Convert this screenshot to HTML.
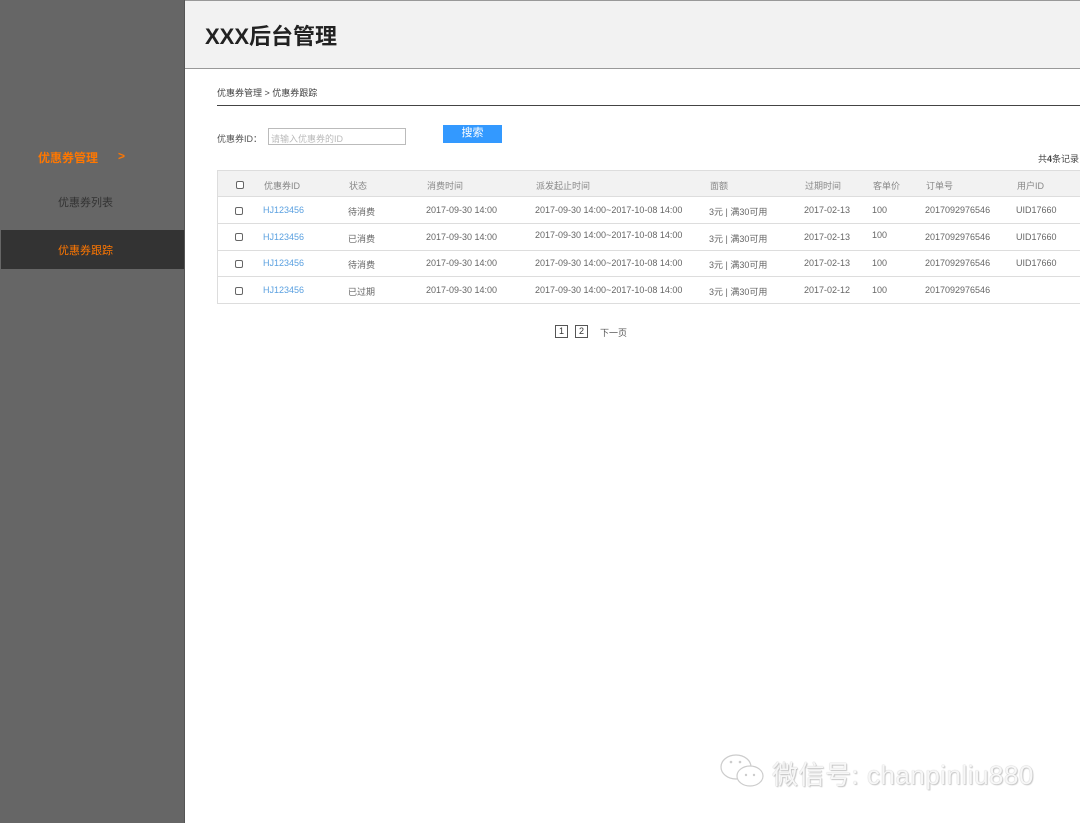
<!DOCTYPE html>
<html><head><meta charset="utf-8"><style>
*{margin:0;padding:0;box-sizing:border-box}
body{width:1080px;height:823px;position:relative;background:#fff;font-family:"Liberation Sans","Noto Sans CJK SC",sans-serif;color:#666;font-size:9px;overflow:hidden}
.a{position:absolute;white-space:nowrap}
#side{position:absolute;left:0;top:0;width:185px;height:823px;background:#666;border-right:1px solid #555}
#hdr{position:absolute;left:185px;top:0;width:895px;height:69px;background:#f2f2f2;border-bottom:1px solid #999;border-top:1px solid #999}
.cb{position:absolute;width:8px;height:8px;border:1px solid #666;border-radius:2px;background:#fff}
.row{position:absolute;left:217px;width:863px;border-bottom:1px solid #ddd}
.c{position:absolute;top:0;white-space:nowrap}
</style></head><body>
<div id="side">
<div class="a" style="left:38px;top:149px;color:#ff7700;font-size:12px;font-weight:bold">优惠券管理</div>
<div class="a" style="left:118px;top:149px;color:#ff7700;font-size:12px;font-weight:bold">&gt;</div>
<div class="a" style="left:58px;top:194px;color:#333;font-size:11px">优惠券列表</div>
<div style="position:absolute;left:1px;top:230px;width:183px;height:39px;background:#333"></div>
<div class="a" style="left:58px;top:242px;color:#ff7700;font-size:11px">优惠券跟踪</div>
</div>
<div id="hdr"><div class="a" style="left:20px;top:18px;font-size:22px;font-weight:bold;color:#222">XXX后台管理</div></div>
<div class="a" style="left:217px;top:86px;color:#444">优惠券管理 &gt; 优惠券跟踪</div>
<div style="position:absolute;left:217px;top:105px;width:863px;height:1px;background:#444"></div>
<div class="a" style="left:217px;top:132px;color:#555">优惠券ID：</div>
<div style="position:absolute;left:268px;top:128px;width:138px;height:17px;border:1px solid #bbb"></div>
<div class="a" style="left:271px;top:132px;color:#bbb">请输入优惠券的ID</div>
<div style="position:absolute;left:443px;top:125px;width:59px;height:18px;background:#3399ff;color:#fff;font-size:11px;text-align:center;line-height:17px">搜索</div>
<div class="a" style="right:1px;top:152px;color:#444">共<b>4</b>条记录</div>
<div style="position:absolute;left:217px;top:170px;width:863px;height:134px;border:1px solid #ddd;border-right:none"></div>
<div class="row" style="top:170px;height:27px;background:#f2f2f2;border-top:1px solid #ddd;border-left:1px solid #ddd">
<div class="cb" style="left:18px;top:10px"></div>
<div class="c" style="left:46px;top:8px;color:#888">优惠券ID</div><div class="c" style="left:131px;top:8px;color:#888">状态</div><div class="c" style="left:209px;top:8px;color:#888">消费时间</div><div class="c" style="left:318px;top:8px;color:#888">派发起止时间</div><div class="c" style="left:492px;top:8px;color:#888">面额</div><div class="c" style="left:587px;top:8px;color:#888">过期时间</div><div class="c" style="left:655px;top:8px;color:#888">客单价</div><div class="c" style="left:708px;top:8px;color:#888">订单号</div><div class="c" style="left:799px;top:8px;color:#888">用户ID</div>
</div>
<div class="row" style="top:197px;height:27px"><div class="cb" style="left:18px;top:10px"></div><div class="c" style="left:46px;top:8px;color:#5aa0e0">HJ123456</div><div class="c" style="left:131px;top:8px">待消费</div><div class="c" style="left:209px;top:8px">2017-09-30 14:00</div><div class="c" style="left:318px;top:8px">2017-09-30 14:00~2017-10-08 14:00</div><div class="c" style="left:492px;top:8px">3元 | 满30可用</div><div class="c" style="left:587px;top:8px">2017-02-13</div><div class="c" style="left:655px;top:8px">100</div><div class="c" style="left:708px;top:8px">2017092976546</div><div class="c" style="left:799px;top:8px">UID17660</div></div>
<div class="row" style="top:224px;height:27px"><div class="cb" style="left:18px;top:9px"></div><div class="c" style="left:46px;top:8px;color:#5aa0e0">HJ123456</div><div class="c" style="left:131px;top:8px">已消费</div><div class="c" style="left:209px;top:8px">2017-09-30 14:00</div><div class="c" style="left:318px;top:6px">2017-09-30 14:00~2017-10-08 14:00</div><div class="c" style="left:492px;top:8px">3元 | 满30可用</div><div class="c" style="left:587px;top:8px">2017-02-13</div><div class="c" style="left:655px;top:6px">100</div><div class="c" style="left:708px;top:8px">2017092976546</div><div class="c" style="left:799px;top:8px">UID17660</div></div>
<div class="row" style="top:251px;height:26px"><div class="cb" style="left:18px;top:9px"></div><div class="c" style="left:46px;top:7px;color:#5aa0e0">HJ123456</div><div class="c" style="left:131px;top:7px">待消费</div><div class="c" style="left:209px;top:7px">2017-09-30 14:00</div><div class="c" style="left:318px;top:7px">2017-09-30 14:00~2017-10-08 14:00</div><div class="c" style="left:492px;top:7px">3元 | 满30可用</div><div class="c" style="left:587px;top:7px">2017-02-13</div><div class="c" style="left:655px;top:7px">100</div><div class="c" style="left:708px;top:7px">2017092976546</div><div class="c" style="left:799px;top:7px">UID17660</div></div>
<div class="row" style="top:277px;height:27px"><div class="cb" style="left:18px;top:10px"></div><div class="c" style="left:46px;top:8px;color:#5aa0e0">HJ123456</div><div class="c" style="left:131px;top:8px">已过期</div><div class="c" style="left:209px;top:8px">2017-09-30 14:00</div><div class="c" style="left:318px;top:8px">2017-09-30 14:00~2017-10-08 14:00</div><div class="c" style="left:492px;top:8px">3元 | 满30可用</div><div class="c" style="left:587px;top:8px">2017-02-12</div><div class="c" style="left:655px;top:8px">100</div><div class="c" style="left:708px;top:8px">2017092976546</div></div>
<div class="a" style="left:555px;top:325px;width:13px;height:13px;border:1px solid #555;text-align:center;line-height:11px;color:#333">1</div>
<div class="a" style="left:575px;top:325px;width:13px;height:13px;border:1px solid #555;text-align:center;line-height:11px;color:#333">2</div>
<div class="a" style="left:600px;top:326px;color:#555">下一页</div>
<svg class="a" style="left:718px;top:752px" width="52" height="40" viewBox="0 0 52 40"><g fill="#fff" stroke="#ccc" stroke-width="1.2"><ellipse cx="18" cy="15" rx="15" ry="12"/><ellipse cx="32" cy="24" rx="13" ry="10"/></g><g fill="#ccc"><circle cx="13" cy="10" r="1.3"/><circle cx="22" cy="10" r="1.3"/><circle cx="28" cy="23" r="1.2"/><circle cx="36" cy="23" r="1.2"/></g></svg>
<div class="a" style="left:772px;top:755px;font-size:26px;color:#f7f7f7;letter-spacing:0.5px;text-shadow:0 0 1px #aaa,1px 1px 1px #ccc">微信号: chanpinliu880</div>
</body></html>
